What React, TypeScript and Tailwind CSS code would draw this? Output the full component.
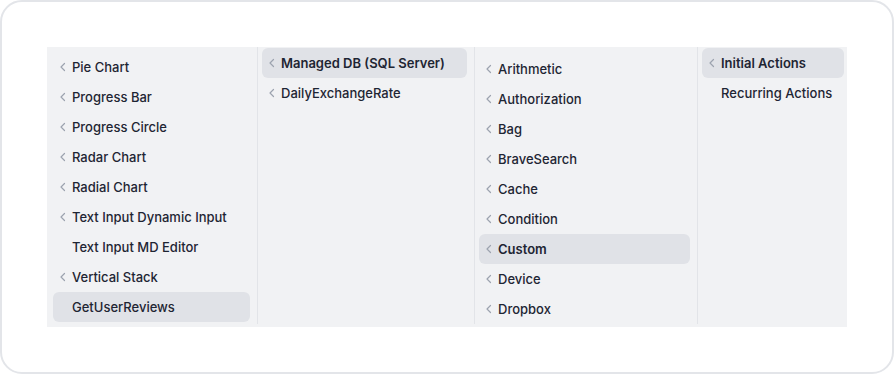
import React from "react";

type Item = { label: string; chevron?: boolean; active?: boolean; bold?: boolean };

const Chevron = () => (
  <svg width="8" height="10" viewBox="0 0 8 10" className="text-[#9ca3af]">
    <polyline points="5.5,1.5 2,5 5.5,8.5" fill="none" stroke="currentColor" strokeWidth="1.2" strokeLinecap="round" strokeLinejoin="round" />
  </svg>
);

function Row({ item }: { item: Item }) {
  return (
    <div
      className={`flex items-center h-[30px] rounded-[6px] pl-[6px] ${item.active ? "bg-[#e0e2e7]" : ""}`}
    >
      <span className="w-[13px] flex items-center justify-start shrink-0">
        {item.chevron !== false ? <Chevron /> : null}
      </span>
      <span
        className={`text-[13px] leading-none whitespace-nowrap text-[#1e2533] ${item.bold ? "font-semibold" : "font-medium"}`}
      >
        {item.label}
      </span>
    </div>
  );
}

const col1: Item[] = [
  { label: "Pie Chart" },
  { label: "Progress Bar" },
  { label: "Progress Circle" },
  { label: "Radar Chart" },
  { label: "Radial Chart" },
  { label: "Text Input Dynamic Input" },
  { label: "Text Input MD Editor", chevron: false },
  { label: "Vertical Stack" },
  { label: "GetUserReviews", chevron: false, active: true },
];
const col2: Item[] = [
  { label: "Managed DB (SQL Server)", active: true, bold: true },
  { label: "DailyExchangeRate" },
];
const col3: Item[] = [
  { label: "Arithmetic" },
  { label: "Authorization" },
  { label: "Bag" },
  { label: "BraveSearch" },
  { label: "Cache" },
  { label: "Condition" },
  { label: "Custom", active: true, bold: true },
  { label: "Device" },
  { label: "Dropbox" },
];
const col4: Item[] = [
  { label: "Initial Actions", active: true, bold: true },
  { label: "Recurring Actions", chevron: false },
];

export default function App() {
  return (
    <div
      className="w-[894px] h-[374px] bg-white"
      style={{ fontFamily: "Inter, 'Noto Sans', sans-serif" }}
    >
      <div className="w-full h-full border-2 border-[#e3e5e9] rounded-[22px] p-[45px]">
        <div className="w-[800px] h-[280px] bg-[#f1f2f4] flex items-start overflow-hidden">
          <div className="w-[211px] h-[277px] border-r border-[#e2e4e8] pt-[5px] pl-[6px] pr-[7px] flex flex-col">
            {col1.map((i) => (
              <Row key={i.label} item={i} />
            ))}
          </div>
          <div className="w-[217px] h-[277px] border-r border-[#e2e4e8] pt-[1px] pl-[4px] pr-[7px] flex flex-col">
            {col2.map((i) => (
              <Row key={i.label} item={i} />
            ))}
          </div>
          <div className="w-[223px] h-[277px] border-r border-[#e2e4e8] pt-[7px] pl-[4px] pr-[7px] flex flex-col">
            {col3.map((i) => (
              <Row key={i.label} item={i} />
            ))}
          </div>
          <div className="w-[149px] h-[277px] pt-[1px] pl-[4px] pr-[3px] flex flex-col">
            {col4.map((i) => (
              <Row key={i.label} item={i} />
            ))}
          </div>
        </div>
      </div>
    </div>
  );
}
